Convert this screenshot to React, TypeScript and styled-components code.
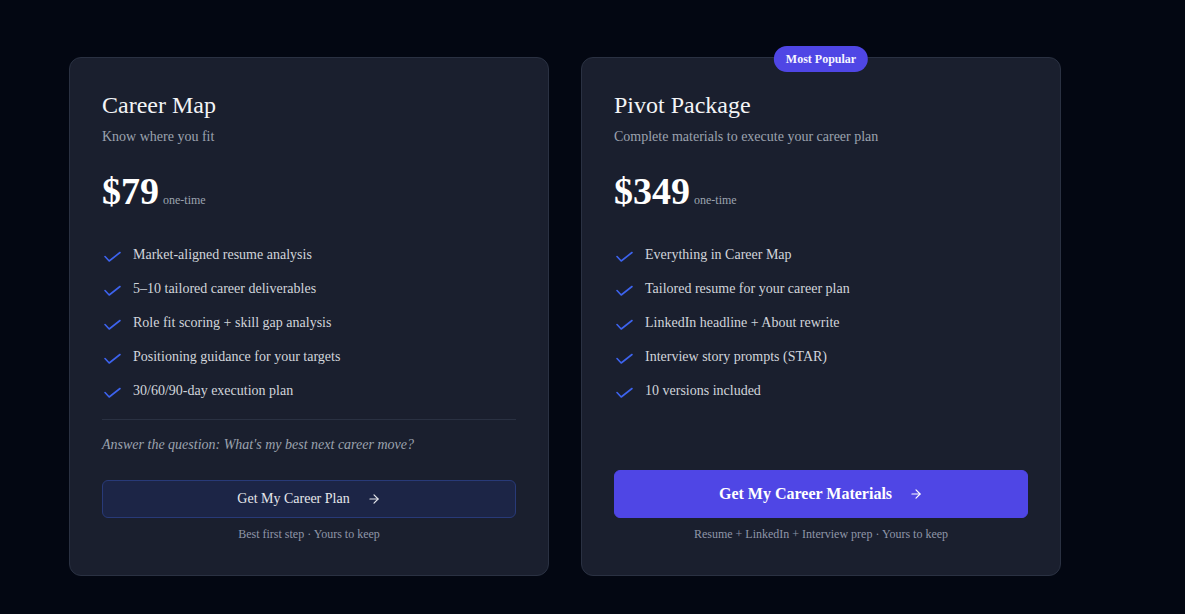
import styled, { createGlobalStyle } from 'styled-components';
import { ArrowRight } from 'lucide-react';

const GlobalStyle = createGlobalStyle`
  html, body {
    margin: 0;
    padding: 0;
    background: #030712;
    font-family: "Liberation Serif", "Times New Roman", serif;
  }
`;

const Page = styled.div`
  min-height: 100vh;
  box-sizing: border-box;
  padding: 57px 0 0 69px;
  background: #030712;
`;

const Grid = styled.div`
  display: grid;
  grid-template-columns: 480px 480px;
  gap: 32px;
  align-items: stretch;
`;

const Card = styled.div`
  position: relative;
  display: flex;
  flex-direction: column;
  box-sizing: border-box;
  padding: 31px 32px 33px;
  background: #1a1f2e;
  border: 1px solid #2a3142;
  border-radius: 12px;
`;

const Badge = styled.div`
  position: absolute;
  top: -12px;
  left: 50%;
  transform: translateX(-50%);
  padding: 4px 12px;
  border-radius: 999px;
  background: #4f46e5;
  color: #f5f5ff;
  font-size: 12px;
  line-height: 18px;
  font-weight: 700;
  white-space: nowrap;
`;

const Title = styled.h3`
  margin: 0;
  font-size: 24px;
  line-height: 32px;
  font-weight: 400;
  color: #f3f4f6;
`;

const Subtitle = styled.p`
  margin: 6px 0 0;
  font-size: 14px;
  line-height: 20px;
  color: #9ca3af;
`;

const PriceRow = styled.div`
  display: flex;
  align-items: baseline;
  gap: 4px;
  margin-top: 25px;
`;

const Price = styled.span`
  font-size: 38px;
  line-height: 1;
  font-weight: 700;
  color: #ffffff;
`;

const PriceNote = styled.span`
  font-size: 12px;
  color: #9ca3af;
`;

const List = styled.ul`
  list-style: none;
  margin: 35px 0 0;
  padding: 0;
  display: flex;
  flex-direction: column;
  gap: 14px;
`;

const Item = styled.li`
  display: flex;
  align-items: flex-start;
  gap: 11px;
  font-size: 14px;
  line-height: 20px;
  color: #d1d5db;
`;

const CheckIcon = styled.svg`
  flex: none;
  margin-top: 6px;
`;

const Divider = styled.hr`
  margin: 18px 0 0;
  border: none;
  border-top: 1px solid #2a3142;
`;

const Question = styled.p`
  margin: 15px 0 0;
  font-size: 14px;
  line-height: 20px;
  font-style: italic;
  color: #9ca3af;
`;

const Button = styled.button<{ $primary?: boolean }>`
  display: flex;
  align-items: center;
  justify-content: center;
  gap: 17px;
  width: 100%;
  box-sizing: border-box;
  margin-top: ${({ $primary }) => ($primary ? 'auto' : '25px')};
  height: ${({ $primary }) => ($primary ? '48px' : '38px')};
  border-radius: 6px;
  border: 1px solid ${({ $primary }) => ($primary ? '#4f46e5' : '#283a78')};
  background: ${({ $primary }) => ($primary ? '#4f46e5' : '#1c2546')};
  color: ${({ $primary }) => ($primary ? '#ffffff' : '#e5e7eb')};
  font-family: inherit;
  font-size: ${({ $primary }) => ($primary ? '16px' : '14px')};
  font-weight: ${({ $primary }) => ($primary ? 700 : 400)};
  cursor: pointer;
`;

const Footnote = styled.p`
  margin: 8px 0 0;
  text-align: center;
  font-size: 12px;
  line-height: 16px;
  color: #8f96a8;
`;

const Check = () => (
  <CheckIcon width="20" height="12" viewBox="0 0 20 12" fill="none">
    <path
      d="M3 5.5 L7.2 10 L18 1.5"
      stroke="#3d63ee"
      strokeWidth="1.6"
      strokeLinecap="round"
      strokeLinejoin="round"
    />
  </CheckIcon>
);

const plans = [
  {
    name: 'Career Map',
    tagline: 'Know where you fit',
    price: '$79',
    features: [
      'Market-aligned resume analysis',
      '5–10 tailored career deliverables',
      'Role fit scoring + skill gap analysis',
      'Positioning guidance for your targets',
      '30/60/90-day execution plan',
    ],
    question: "Answer the question: What's my best next career move?",
    cta: 'Get My Career Plan',
    note: 'Best first step · Yours to keep',
    popular: false,
  },
  {
    name: 'Pivot Package',
    tagline: 'Complete materials to execute your career plan',
    price: '$349',
    features: [
      'Everything in Career Map',
      'Tailored resume for your career plan',
      'LinkedIn headline + About rewrite',
      'Interview story prompts (STAR)',
      '10 versions included',
    ],
    question: '',
    cta: 'Get My Career Materials',
    note: 'Resume + LinkedIn + Interview prep · Yours to keep',
    popular: true,
  },
];

export default function App() {
  return (
    <>
      <GlobalStyle />
      <Page>
        <Grid>
          {plans.map((p) => (
            <Card key={p.name}>
              {p.popular && <Badge>Most Popular</Badge>}
              <Title>{p.name}</Title>
              <Subtitle>{p.tagline}</Subtitle>
              <PriceRow>
                <Price>{p.price}</Price>
                <PriceNote>one-time</PriceNote>
              </PriceRow>
              <List>
                {p.features.map((f) => (
                  <Item key={f}>
                    <Check />
                    {f}
                  </Item>
                ))}
              </List>
              {p.question && (
                <>
                  <Divider />
                  <Question>{p.question}</Question>
                </>
              )}
              <Button $primary={p.popular}>
                {p.cta}
                <ArrowRight size={14} strokeWidth={2} />
              </Button>
              <Footnote>{p.note}</Footnote>
            </Card>
          ))}
        </Grid>
      </Page>
    </>
  );
}
